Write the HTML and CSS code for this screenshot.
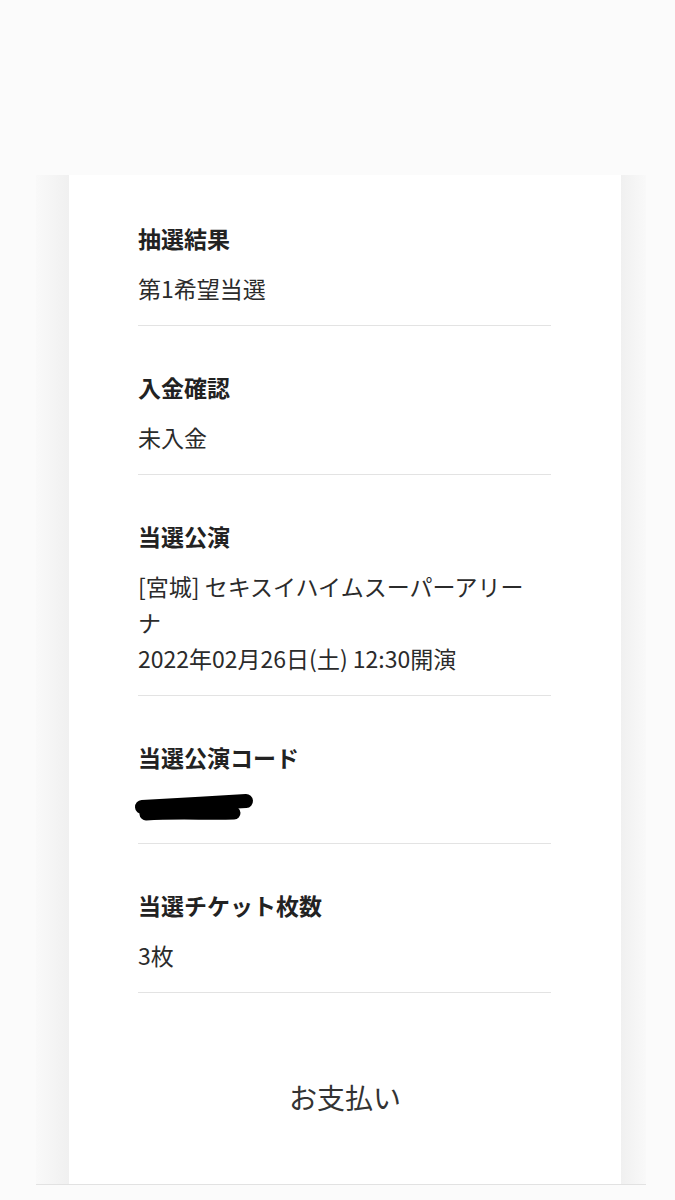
FILE: index.html
```html
<!DOCTYPE html>
<html lang="ja">
<head>
    <meta charset="UTF-8">
    <meta name="viewport" content="width=device-width, initial-scale=1.0">
    <title>抽選結果</title>
    <link rel="stylesheet" href="styles.css">
</head>
<body>
    <div class="sheet">
        <div class="card">
            <div class="item">
                <h3 class="label">抽選結果</h3>
                <p class="value">第1希望当選</p>
            </div>
            <div class="item">
                <h3 class="label">入金確認</h3>
                <p class="value">未入金</p>
            </div>
            <div class="item">
                <h3 class="label">当選公演</h3>
                <p class="value venue">[宮城] セキスイハイムスーパーアリーナ</p>
                <p class="value">2022年02月26日(土) 12:30開演</p>
            </div>
            <div class="item">
                <h3 class="label">当選公演コード</h3>
                <div class="value code">
                    <!-- blacked out code -->
                    <svg class="blackout" width="122" height="30" viewBox="0 0 122 30">
                        <path d="M9 14 C40 12, 80 10, 113 8" stroke="#000" stroke-width="14" stroke-linecap="round" fill="none"/>
                        <path d="M13 21 C45 19, 75 21, 101 20" stroke="#000" stroke-width="13" stroke-linecap="round" fill="none"/>
                    </svg>
                </div>
            </div>
            <div class="item">
                <h3 class="label">当選チケット枚数</h3>
                <p class="value">3枚</p>
            </div>
            <div class="pay">
                <a href="#" class="pay-link">お支払い</a>
            </div>
        </div>
    </div>
</body>
</html>
```

FILE: styles.css
```css
body {
    margin: 0;
    background-color: #fbfbfb;
    font-family: "Noto Sans CJK JP", "Noto Sans", sans-serif;
    color: #333;
}
.sheet {
    margin: 175px 0 0 36px;
    width: 610px;
    border-bottom: 1px solid #e2e2e2;
    background: linear-gradient(to right, #f9f9f9 0, #f0f0f0 33px, #fff 33px, #fff 585px, #f0f0f0 585px, #f9f9f9 610px);
}
.card {
    margin-left: 33px;
    width: 552px;
    background: #fff;
    padding: 2px 0 67px;
}
.item {
    margin: 0 70px 0 69px;
    padding: 46px 0 18px;
    border-bottom: 1px solid #e3e3e3;
}
.label {
    margin: 0 0 17px;
    font-size: 23px;
    line-height: 30px;
    font-weight: 700;
    color: #222;
}
.value {
    margin: 0;
    font-size: 23px;
    line-height: 37px;
    color: #2b2b2b;
}
.venue {
    max-width: 400px;
    line-height: 36px;
}
.code {
    padding: 4px 0 2px;
    line-height: 0;
}
.blackout {
    display: block;
    margin-left: -5px;
}
.pay {
    margin-top: 84px;
    text-align: center;
}
.pay-link {
    font-size: 28px;
    line-height: 40px;
    color: #333;
    text-decoration: none;
}
```
